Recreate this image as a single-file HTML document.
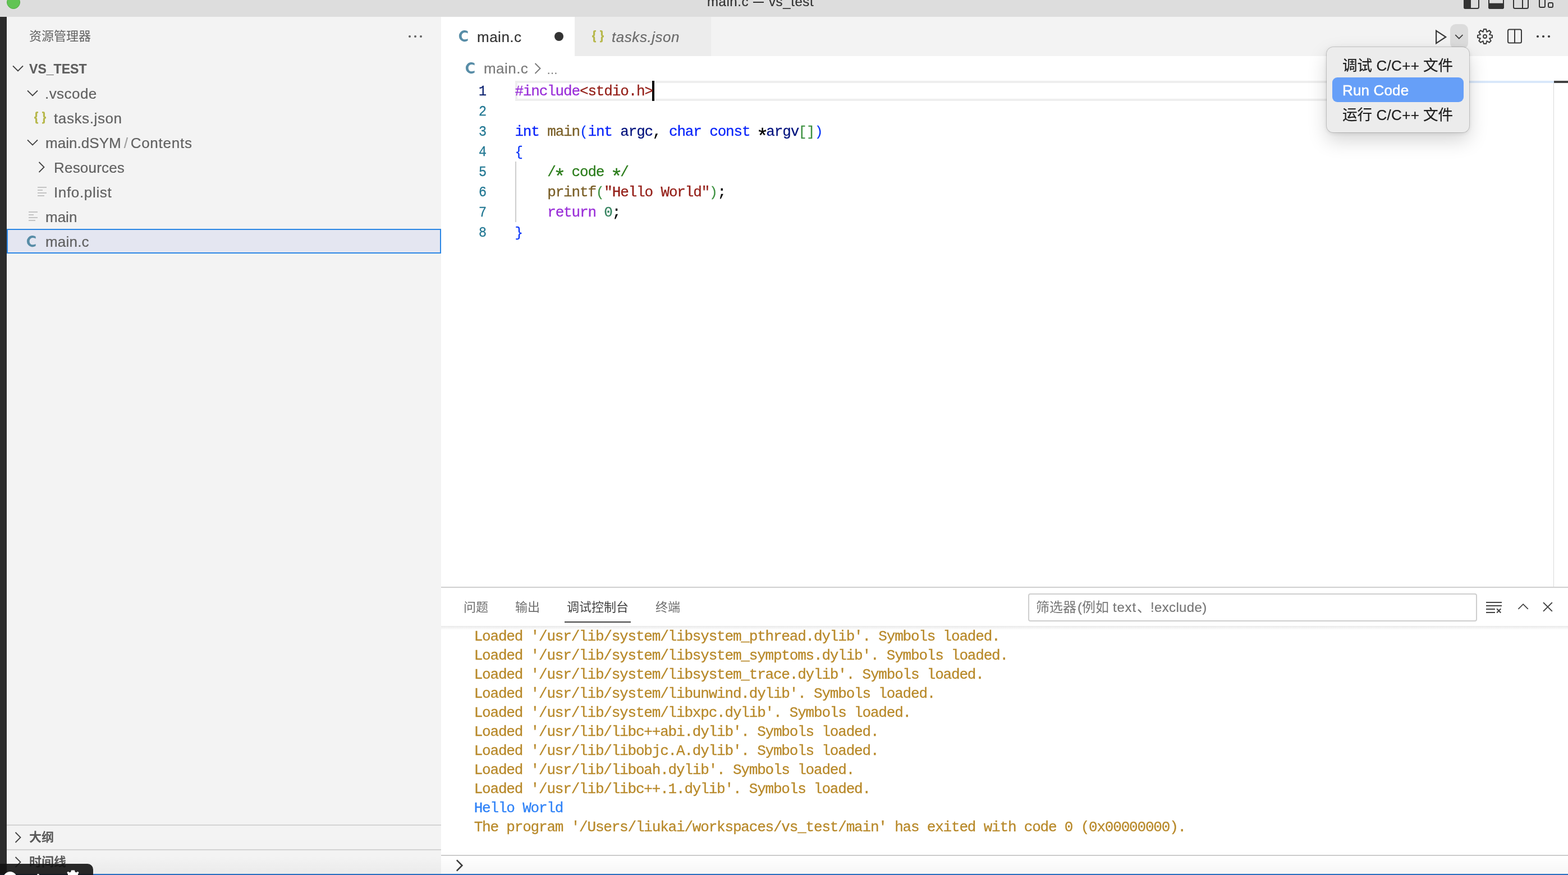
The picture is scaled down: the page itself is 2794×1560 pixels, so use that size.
<!DOCTYPE html>
<html lang="zh">
<head>
<meta charset="utf-8">
<title>main.c — vs_test</title>
<style>
*{box-sizing:border-box;margin:0;padding:0}
html,body{width:2794px;height:1560px;overflow:hidden;background:#fff}
body{position:relative;font-family:"Liberation Sans",sans-serif;font-size:26px;color:#616161}
.a{position:absolute}
.cj{position:absolute;display:block;overflow:visible;white-space:pre;font-family:"Liberation Sans","Noto Sans CJK SC",sans-serif}
.t{position:absolute;white-space:pre;height:44px;line-height:44px;-webkit-text-stroke:.2px}
.ic{position:absolute;overflow:visible}
.mono{font-family:"Liberation Mono",monospace;font-size:24px;letter-spacing:.05px;white-space:pre;position:absolute}
/* code */
.ln{position:absolute;left:786px;width:80px;text-align:right;height:36px;line-height:38px;font-family:"Liberation Mono",monospace;font-size:26px;letter-spacing:-1.156px;-webkit-text-stroke:.3px;color:#237893;transform:scaleX(.9);transform-origin:79px 50%}
.cl{position:absolute;left:917.4px;height:36px;line-height:38px;font-family:"Liberation Mono",monospace;font-size:26px;letter-spacing:-1.156px;-webkit-text-stroke:.3px;white-space:pre;color:#000}
.kw{color:#0a25fa}.cf{color:#9a2fd8}.st{color:#941f18}.fn{color:#795e26}.va{color:#04147e}.cm{color:#2c7d1c}.nu{color:#35835f}
.as{display:inline-block;width:14.446px;letter-spacing:0;text-indent:-3.4px;font-size:37px;line-height:0;position:relative;top:13px}
.b1{color:#0935f9}.b2{color:#3d9140}.b1,.b2{font-size:24px;letter-spacing:.046px}
.dl{position:absolute;left:844.7px;height:34px;line-height:36px;font-family:"Liberation Mono",monospace;font-size:26px;letter-spacing:-1.19px;-webkit-text-stroke:.3px;white-space:pre;color:#b8892a}
</style>
</head>
<body>
<svg width="0" height="0" style="position:absolute"><defs>
<path id="icC" d="M15.6,1.7A10.15,10.15 0 1 0 15.6,18.6V14.9Q13,16.3 10.4,16.3C7,16.3 4.6,13.7 4.6,10.15C4.6,6.6 7,4 10.4,4Q13,4 15.6,5.4Z"/>
<path id="icBr" d="M7,0H5C3,0 2,1 2,3V7.6C2,8.8 1.4,9.35 0,9.35V12.15C1.4,12.15 2,12.7 2,13.9V18.5C2,20.5 3,21.5 5,21.5H7V19.1H6.2C5.5,19.1 5.2,18.8 5.2,18V13.4C5.2,12 4.5,11.1 3.2,10.75C4.5,10.4 5.2,9.5 5.2,8.1V3.5C5.2,2.7 5.5,2.4 6.2,2.4H7Z"/>
<g id="icJson"><use href="#icBr"/><use href="#icBr" transform="translate(21,0) scale(-1,1)"/></g>
</defs></svg>
<div id="root" style="position:absolute;left:0;top:0;width:2794px;height:1560px;will-change:transform">

<!-- ===== title bar ===== -->
<div class="a" id="titlebar" style="left:0;top:0;width:2794px;height:30px;background:#dddddd;overflow:hidden">
  <div class="a" style="left:12px;top:-8px;width:24px;height:24px;border-radius:50%;background:#61c454;border:1px solid #50ad42"></div>
  <div class="t" style="left:1260px;top:-19px;color:#333;font-size:24px;letter-spacing:.55px">main.c</div><div class="a" style="left:1342px;top:3px;width:19px;height:2px;background:#333"></div><div class="t" style="left:1370px;top:-19px;color:#333;font-size:24px;letter-spacing:.6px">vs_test</div>
  
  <svg class="ic" style="left:2606px;top:-12px" width="32" height="32" fill="none" stroke="#333" stroke-width="2"><rect x="3" y="5" width="26" height="22" rx="2.5"/><path d="M3,7.5Q3,5 5.5,5H14V27H5.5Q3,27 3,24.5Z" fill="#333"/></svg>
  <svg class="ic" style="left:2650px;top:-12px" width="32" height="32" fill="none" stroke="#333" stroke-width="2"><rect x="3" y="5" width="26" height="22" rx="2.5"/><path d="M3,18.8H29V24.5Q29,27 26.5,27H5.5Q3,27 3,24.5Z" fill="#333"/></svg>
  <svg class="ic" style="left:2694px;top:-12px" width="32" height="32" fill="none" stroke="#333" stroke-width="2"><rect x="3" y="5" width="26" height="22" rx="2.5"/><path d="M19,5V27"/></svg>
  <svg class="ic" style="left:2740px;top:-12px" width="32" height="32" fill="none" stroke="#333" stroke-width="2"><rect x="3" y="3" width="10" height="22" rx="2"/><rect x="19" y="17" width="8" height="8" rx="2"/></svg>

</div>

<!-- ===== activity strip ===== -->
<div class="a" style="left:0;top:30px;width:12px;height:1530px;background:#2c2c2c"></div>

<!-- ===== sidebar ===== -->
<div class="a" id="sidebar" style="left:12px;top:30px;width:774px;height:1530px;background:#f3f3f3"></div>

<!-- sidebar title -->
<div class="cj" style="left:52px;top:54px;height:22px;line-height:22px;font-size:22px;color:#616161">资源管理器</div>
<svg class="ic" style="left:726px;top:61px" width="28" height="8"><circle cx="4" cy="4" r="2" fill="#616161"/><circle cx="14" cy="4" r="2" fill="#616161"/><circle cx="24" cy="4" r="2" fill="#616161"/></svg>

<!-- VS_TEST header -->
<svg class="ic" style="left:20px;top:110px" width="24" height="24" fill="none" stroke="#424242" stroke-width="1.8"><polyline points="3,7.5 12,16.5 21,7.5"/></svg>
<div class="t" style="left:52px;top:101px;font-size:23px;font-weight:bold;color:#5e5e5e;letter-spacing:.05px">VS_TEST</div>

<!-- .vscode -->
<svg class="ic" style="left:46px;top:154px" width="24" height="24" fill="none" stroke="#424242" stroke-width="1.8"><polyline points="3,7.5 12,16.5 21,7.5"/></svg>
<div class="t" style="left:80px;top:145px;letter-spacing:.45px">.vscode</div>

<!-- tasks.json -->
<svg class="ic" style="left:61px;top:198.8px" width="21" height="22" fill="#b7b84c"><use href="#icJson"/></svg>
<div class="t" style="left:96px;top:189px;letter-spacing:.6px">tasks.json</div>

<!-- main.dSYM / Contents -->
<svg class="ic" style="left:46px;top:242px" width="24" height="24" fill="none" stroke="#424242" stroke-width="1.8"><polyline points="3,7.5 12,16.5 21,7.5"/></svg>
<div class="t" style="left:81px;top:233px;letter-spacing:.05px">main.dSYM<span style="color:#a0a0a0;padding:0 4.5px 0 5px">/</span><span style="letter-spacing:.75px">Contents</span></div>

<!-- Resources -->
<svg class="ic" style="left:62px;top:286px" width="24" height="24" fill="none" stroke="#424242" stroke-width="1.8"><polyline points="7.5,3 16.5,12 7.5,21"/></svg>
<div class="t" style="left:96px;top:277px;letter-spacing:.2px">Resources</div>

<!-- Info.plist -->
<svg class="ic" style="left:66px;top:332px" width="18" height="20" fill="#c4c4c4"><rect x="1" y="1" width="16" height="2"/><rect x="1" y="6" width="9" height="2"/><rect x="1" y="11" width="16" height="2"/><rect x="1" y="16" width="12" height="2"/></svg>
<div class="t" style="left:96px;top:321px;letter-spacing:.65px">Info.plist</div>

<!-- main -->
<svg class="ic" style="left:50px;top:376px" width="18" height="20" fill="#c4c4c4"><rect x="1" y="1" width="16" height="2"/><rect x="1" y="6" width="9" height="2"/><rect x="1" y="11" width="16" height="2"/><rect x="1" y="16" width="12" height="2"/></svg>
<div class="t" style="left:81px;top:365px">main</div>

<!-- main.c (selected) -->
<div class="a" style="left:12px;top:408px;width:774px;height:44px;background:#e4e6f1;border:2px solid #2a86e5"></div>
<svg class="ic" style="left:47.7px;top:419.5px" width="16" height="21" fill="#588da7"><use href="#icC"/></svg>
<div class="t" style="left:81px;top:409px;letter-spacing:.2px">main.c</div>

<!-- bottom sections -->
<div class="a" style="left:12px;top:1470px;width:774px;height:2px;background:#d3d3d3"></div>
<svg class="ic" style="left:20px;top:1481px" width="24" height="24" fill="none" stroke="#424242" stroke-width="1.8"><polyline points="7.5,3 16.5,12 7.5,21"/></svg>
<div class="cj" style="left:52px;top:1482px;height:22px;line-height:22px;font-size:22px;font-weight:bold;color:#585858">大纲</div>
<div class="a" style="left:12px;top:1514px;width:774px;height:2px;background:#d3d3d3"></div>
<svg class="ic" style="left:20px;top:1525px" width="24" height="24" fill="none" stroke="#424242" stroke-width="1.8"><polyline points="7.5,3 16.5,12 7.5,21"/></svg>
<div class="cj" style="left:52px;top:1526px;height:22px;line-height:22px;font-size:22px;font-weight:bold;color:#585858">时间线</div>


<!-- ===== editor ===== -->

<!-- tab bar -->
<div class="a" style="left:786px;top:30px;width:2008px;height:70px;background:#f3f3f3"></div>
<div class="a" style="left:786px;top:30px;width:238px;height:70px;background:#fff"></div>
<div class="a" style="left:1024px;top:30px;width:243px;height:70px;background:#ececec"></div>
<svg class="ic" style="left:817.6px;top:54.3px" width="16" height="21" fill="#588da7"><use href="#icC"/></svg>
<div class="t" style="left:850px;top:44px;color:#333;letter-spacing:.5px">main.c</div>
<div class="a" style="left:988px;top:57px;width:16px;height:16px;border-radius:50%;background:#333"></div>
<svg class="ic" style="left:1055px;top:53.8px" width="21" height="22" fill="#b7b84c"><use href="#icJson"/></svg>
<div class="t" style="left:1090px;top:44px;color:#6b6b6b;font-style:italic;letter-spacing:.55px">tasks.json</div>

<!-- breadcrumbs -->
<svg class="ic" style="left:829.7px;top:111px" width="16" height="21" fill="#588da7"><use href="#icC"/></svg>
<div class="t" style="left:862px;top:100px;color:#7a7a7a;letter-spacing:.45px">main.c</div>
<svg class="ic" style="left:946px;top:110px" width="24" height="24" fill="none" stroke="#7a7a7a" stroke-width="2"><polyline points="7.5,3 16.5,12 7.5,21"/></svg>
<div class="t" style="left:974px;top:100px;color:#7a7a7a;font-size:20px;line-height:50px">…</div>

<!-- current line highlight + minimap -->
<div class="a" style="left:918px;top:144px;width:1700px;height:36px;border:4px solid #eeeeee"></div>
<div class="a" style="left:2560px;top:144px;width:209px;height:4px;background:#d9e8fa"></div>
<div class="a" style="left:2768px;top:148px;width:1px;height:898px;background:#d9d9d9"></div>
<div class="a" style="left:2769px;top:144px;width:25px;height:4px;background:#424242"></div>
<!-- indent guide -->
<div class="a" style="left:917.5px;top:288px;width:2px;height:108px;background:#cdcdcd"></div>
<!-- cursor -->
<div class="a" style="left:1162px;top:144px;width:4px;height:36px;background:#000"></div>

<!-- line numbers -->
<div class="ln" style="top:144px;color:#0b216f">1</div>
<div class="ln" style="top:180px">2</div>
<div class="ln" style="top:216px">3</div>
<div class="ln" style="top:252px">4</div>
<div class="ln" style="top:288px">5</div>
<div class="ln" style="top:324px">6</div>
<div class="ln" style="top:360px">7</div>
<div class="ln" style="top:396px">8</div>

<!-- code -->
<div class="cl" style="top:144px"><span class="cf">#include</span><span class="st">&lt;stdio.h&gt;</span></div>
<div class="cl" style="top:216px"><span class="kw">int</span> <span class="fn">main</span><span class="b1">(</span><span class="kw">int</span> <span class="va">argc</span>, <span class="kw">char</span> <span class="kw">const</span> <span class="as">*</span><span class="va">argv</span><span class="b2">[]</span><span class="b1">)</span></div>
<div class="cl" style="top:252px"><span class="b1">{</span></div>
<div class="cl" style="top:288px">    <span class="cm">/<span class="as">*</span> code <span class="as">*</span>/</span></div>
<div class="cl" style="top:324px">    <span class="fn">printf</span><span class="b2">(</span><span class="st">"Hello World"</span><span class="b2">)</span>;</div>
<div class="cl" style="top:360px">    <span class="cf">return</span> <span class="nu">0</span>;</div>
<div class="cl" style="top:396px"><span class="b1">}</span></div>


<!-- ===== panel ===== -->

<div class="a" style="left:786px;top:1046px;width:2008px;height:2px;background:#cfcfcf"></div>
<!-- panel tabs -->
<div class="cj" style="left:826px;top:1072px;height:22px;line-height:22px;font-size:22px;color:#6f6f6f">问题</div>
<div class="cj" style="left:918px;top:1072px;height:22px;line-height:22px;font-size:22px;color:#6f6f6f">输出</div>
<div class="cj" style="left:1010px;top:1072px;height:22px;line-height:22px;font-size:22px;color:#424242">调试控制台</div>
<div class="a" style="left:1006px;top:1108px;width:118px;height:2px;background:#424242"></div>
<div class="cj" style="left:1168px;top:1072px;height:22px;line-height:22px;font-size:22px;color:#6f6f6f">终端</div>
<!-- filter box -->
<div class="a" style="left:1832px;top:1058px;width:800px;height:50px;background:#fff;border:2px solid #cecece;border-radius:4px"></div>
<div class="cj" style="left:1846px;top:1071px;height:24px;line-height:24px;font-size:24px;color:#767676">筛选器</div>
<div class="t" style="left:1920px;top:1061px;color:#767676;font-size:24px">(</div>
<div class="cj" style="left:1928px;top:1071px;height:24px;line-height:24px;font-size:24px;color:#767676">例如</div>
<div class="t" style="left:1983px;top:1061px;color:#767676;font-size:24px;letter-spacing:.8px">text</div>
<div class="cj" style="left:2026px;top:1071px;height:24px;line-height:24px;font-size:24px;color:#767676">、</div>
<div class="t" style="left:2050px;top:1061px;color:#767676;font-size:24px;letter-spacing:.35px">!exclude)</div>
<!-- panel actions -->
<svg class="ic" style="left:2646px;top:1070px" width="32" height="26" fill="none" stroke="#424242" stroke-width="2"><path d="M2,4H30M2,10H30M2,16H18M2,22H18M21.1,15.3L28.3,22.5M28.3,15.3L21.1,22.5"/></svg>
<svg class="ic" style="left:2702px;top:1071px" width="24" height="24" fill="none" stroke="#424242" stroke-width="1.8"><polyline points="3.4,14.9 12.1,6.2 20.8,14.9"/></svg>
<svg class="ic" style="left:2747px;top:1071px" width="24" height="24" fill="none" stroke="#424242" stroke-width="2"><path d="M3,3.1L18.8,18.9M18.8,3.1L3,18.9"/></svg>
<!-- header shadow -->
<div class="a" style="left:786px;top:1116px;width:2008px;height:7px;background:linear-gradient(#e9e9e9,#fff)"></div>
<!-- console output -->
<div class="dl" style="top:1117px">Loaded '/usr/lib/system/libsystem_pthread.dylib'. Symbols loaded.</div>
<div class="dl" style="top:1151px">Loaded '/usr/lib/system/libsystem_symptoms.dylib'. Symbols loaded.</div>
<div class="dl" style="top:1185px">Loaded '/usr/lib/system/libsystem_trace.dylib'. Symbols loaded.</div>
<div class="dl" style="top:1219px">Loaded '/usr/lib/system/libunwind.dylib'. Symbols loaded.</div>
<div class="dl" style="top:1253px">Loaded '/usr/lib/system/libxpc.dylib'. Symbols loaded.</div>
<div class="dl" style="top:1287px">Loaded '/usr/lib/libc++abi.dylib'. Symbols loaded.</div>
<div class="dl" style="top:1321px">Loaded '/usr/lib/libobjc.A.dylib'. Symbols loaded.</div>
<div class="dl" style="top:1355px">Loaded '/usr/lib/liboah.dylib'. Symbols loaded.</div>
<div class="dl" style="top:1389px">Loaded '/usr/lib/libc++.1.dylib'. Symbols loaded.</div>
<div class="dl" style="top:1423px;color:#2f82f7">Hello World</div>
<div class="dl" style="top:1457px">The program '/Users/liukai/workspaces/vs_test/main' has exited with code 0 (0x00000000).</div>
<!-- input -->
<div class="a" style="left:786px;top:1524px;width:2008px;height:2px;background:#cbcbcb"></div>
<svg class="ic" style="left:806px;top:1531px" width="24" height="24" fill="none" stroke="#3b3b3b" stroke-width="2.5"><polyline points="7.8,2.4 17.4,12 7.8,21.6"/></svg>


<!-- ===== status bar + overlays ===== -->

<!-- editor toolbar -->
<svg class="ic" style="left:2554px;top:49px" width="32" height="32" fill="none" stroke="#3b3b3b" stroke-width="2.2" stroke-linejoin="miter"><path d="M5.1,5.9V28.1L22.2,17Z"/></svg>
<div class="a" style="left:2584px;top:43px;width:32px;height:44px;border-radius:10px;background:#dcdcdc"></div>
<svg class="ic" style="left:2588px;top:53px" width="24" height="24" fill="none" stroke="#3b3b3b" stroke-width="1.7"><polyline points="5.2,9.1 11.8,15.7 18.4,9.1"/></svg>
<svg class="ic" id="gear" style="left:2630px;top:49px" width="32" height="32" fill="none" stroke="#3b3b3b" stroke-width="2" stroke-linejoin="miter">
  <path d="M14.00,2.95L18.00,2.95L19.41,7.78L23.81,5.36L26.64,8.19L24.22,12.59L29.05,14.00L29.05,18.00L24.22,19.41L26.64,23.81L23.81,26.64L19.41,24.22L18.00,29.05L14.00,29.05L12.59,24.22L8.19,26.64L5.36,23.81L7.78,19.41L2.95,18.00L2.95,14.00L7.78,12.59L5.36,8.19L8.19,5.36L12.59,7.78Z"/>
  <circle cx="16" cy="16" r="3" stroke-width="1.9"/>
</svg>
<svg class="ic" style="left:2683px;top:49px" width="32" height="32" fill="none" stroke="#3b3b3b" stroke-width="2"><rect x="4" y="3.4" width="24" height="24" rx="2.5"/><path d="M16,3.4V27.4"/></svg>
<svg class="ic" style="left:2734px;top:61px" width="32" height="8" fill="#3b3b3b"><circle cx="6" cy="4" r="2.1"/><circle cx="16" cy="4" r="2.1"/><circle cx="26" cy="4" r="2.1"/></svg>

<!-- popup menu -->
<div class="a" id="menu" style="left:2364px;top:84px;width:254px;height:152px;border-radius:12px;background:#ececec;box-shadow:0 0 0 1px rgba(0,0,0,.16),0 14px 34px rgba(0,0,0,.17),0 2px 8px rgba(0,0,0,.10)"></div>
<div class="a" style="left:2374px;top:138px;width:234px;height:44px;border-radius:9px;background:#669ff8"></div>
<div class="cj" style="left:2392px;top:103.5px;height:26.6px;line-height:26.6px;font-size:26.6px;color:#1e1e1e;-webkit-text-stroke:.25px">调试</div>
<div class="t" style="left:2452.5px;top:95px;color:#1e1e1e;letter-spacing:.3px;-webkit-text-stroke:.25px">C/C++</div>
<div class="cj" style="left:2536px;top:103.5px;height:26.6px;line-height:26.6px;font-size:26.6px;color:#1e1e1e;-webkit-text-stroke:.25px">文件</div>
<div class="t" style="left:2392px;top:139px;color:#fff;letter-spacing:.15px;-webkit-text-stroke:.5px #fff">Run Code</div>
<div class="cj" style="left:2392px;top:191.5px;height:26.6px;line-height:26.6px;font-size:26.6px;color:#1e1e1e;-webkit-text-stroke:.25px">运行</div>
<div class="t" style="left:2452.5px;top:183px;color:#1e1e1e;letter-spacing:.3px;-webkit-text-stroke:.25px">C/C++</div>
<div class="cj" style="left:2536px;top:191.5px;height:26.6px;line-height:26.6px;font-size:26.6px;color:#1e1e1e;-webkit-text-stroke:.25px">文件</div>

<div class="a" style="left:12px;top:1526px;width:2782px;height:32px;background:linear-gradient(rgba(0,0,0,0),rgba(0,0,0,.035))"></div>
<!-- status bar -->
<div class="a" style="left:0;top:1558px;width:2794px;height:2px;background:#2a6fc0"></div>
<!-- dark overlay bottom-left -->
<div class="a" style="left:0;top:1540px;width:166px;height:24px;border-top-right-radius:10px;background:rgba(18,18,18,.9)"></div>
<div class="a" style="left:6px;top:1554px;width:24px;height:24px;border-radius:50%;background:#fff"></div>
<div class="a" style="left:66px;top:1558px;width:4px;height:4px;border-radius:50%;background:#fff"></div>
<svg class="ic" style="left:116px;top:1550px" width="28" height="28" fill="#fff"><path d="M11,1.5h6l.6,3 2.4,1 2.6-1.7 2,2-1.7,2.6V12H5V8.400L3.300,5.800l2-2L7.900,5.500l2.400-1z"/></svg>


</div>
</body>
</html>
